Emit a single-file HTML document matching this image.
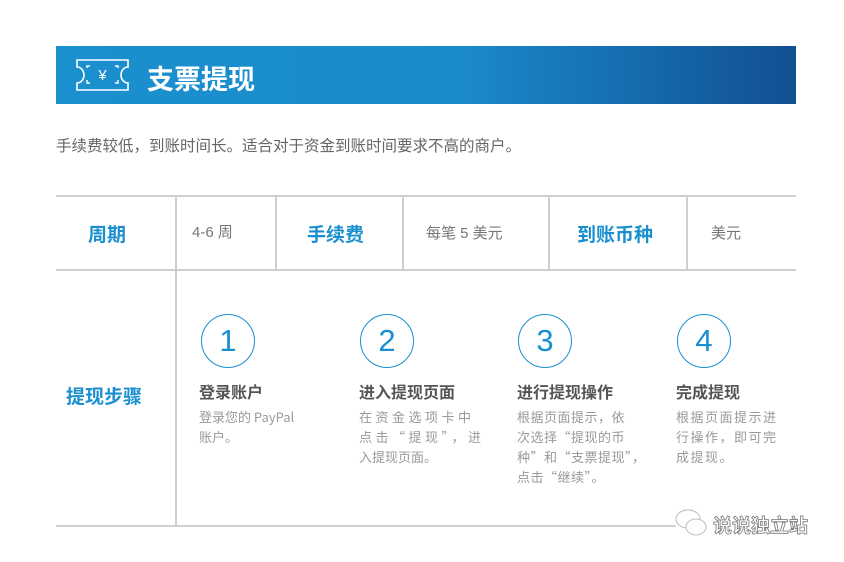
<!DOCTYPE html>
<html><head><meta charset="utf-8"><style>
body{margin:0;width:844px;height:562px;background:#fff;position:relative;overflow:hidden;font-family:"Liberation Sans","Noto Sans CJK SC",sans-serif}
.a{position:absolute;white-space:nowrap}
.l{position:absolute;background:#cfcfcf}
.lab{color:#1a8fd0;font-weight:bold;font-size:19px}
.g{color:#777;font-size:15px}
.c{position:absolute;width:52px;height:52px;border:1.6px solid #1a8fd0;border-radius:50%;color:#1a8fd0;font-size:31px;text-align:center;line-height:52px;top:314px}
.t{position:absolute;top:379px;font-size:16px;font-weight:bold;color:#555}
.d{position:absolute;top:407px;font-size:13px;color:#999;line-height:20px;white-space:nowrap;font-family:"Noto Sans CJK SC",sans-serif}
</style></head><body>
<div style="position:absolute;left:56px;top:46px;width:740px;height:58px;background:linear-gradient(90deg,#1b90cf 0%,#1a8acb 55%,#124f91 100%)"></div>
<svg class="a" style="left:74px;top:58px" width="58" height="34" viewBox="0 0 58 34" fill="none" stroke="#fff" stroke-width="1.6">
<path d="M3 2H54V9A7 8 0 0 0 54 25V32H3V25A7 8 0 0 0 3 9Z"/>
<path d="M13 10V8H16M41 8H44V10M13 22V25H16M41 25H44V22" stroke-width="1.4"/>
<text x="28.5" y="22" fill="#fff" stroke="none" font-size="15" text-anchor="middle" font-family="Liberation Sans">¥</text>
</svg>
<div class="a" style="left:147px;top:58px;color:#fff;font-size:27px;font-weight:bold">支票提现</div>
<div class="a" style="left:56px;top:134px;color:#666;font-size:15.5px">手续费较低，到账时间长。适合对于资金到账时间要求不高的商户。</div>
<div class="l" style="left:56px;top:195px;width:740px;height:1.5px"></div>
<div class="l" style="left:56px;top:269px;width:740px;height:1.5px"></div>
<div class="l" style="left:56px;top:525px;width:740px;height:1.5px"></div>
<div class="l" style="left:175px;top:195px;width:1.5px;height:331px"></div>
<div class="l" style="left:275px;top:195px;width:1.5px;height:75px"></div>
<div class="l" style="left:402px;top:195px;width:1.5px;height:75px"></div>
<div class="l" style="left:548px;top:195px;width:1.5px;height:75px"></div>
<div class="l" style="left:686px;top:195px;width:1.5px;height:75px"></div>
<div class="a lab" style="left:88px;top:220px">周期</div>
<div class="a g" style="left:192px;top:221px">4-6 周</div>
<div class="a lab" style="left:307px;top:220px">手续费</div>
<div class="a g" style="left:426px;top:222px">每笔 5 美元</div>
<div class="a lab" style="left:577px;top:220px">到账币种</div>
<div class="a g" style="left:711px;top:222px">美元</div>
<div class="a lab" style="left:66px;top:382px">提现步骤</div>
<div class="c" style="left:201px">1</div>
<div class="c" style="left:360px">2</div>
<div class="c" style="left:518px">3</div>
<div class="c" style="left:677px">4</div>
<div class="t" style="left:199px">登录账户</div>
<div class="t" style="left:359px">进入提现页面</div>
<div class="t" style="left:517px">进行提现操作</div>
<div class="t" style="left:676px">完成提现</div>
<div class="d" style="left:199px">登录您的 PayPal<br>账户。</div>
<div class="d" style="left:359px;letter-spacing:3.5px">在资金选项卡中<br>点击“提现”，进<br><span style="letter-spacing:0">入提现页面。</span></div>
<div class="d" style="left:517px;letter-spacing:0.5px">根据页面提示，依<br>次选择“提现的币<br>种”和“支票提现”，<br>点击“继续”。</div>
<div class="d" style="left:676px;letter-spacing:1.5px">根据页面提示进<br>行操作，即可完<br>成提现。</div>
<div class="a" style="left:676px;top:509px;width:140px;height:30px;background:#fff"></div>
<svg class="a" style="left:672px;top:507px" width="40" height="32" viewBox="0 0 40 32" fill="#fff" stroke="#bbb" stroke-width="1"><ellipse cx="16" cy="12" rx="12" ry="9"/><ellipse cx="24" cy="20" rx="10" ry="8"/></svg>
<div class="a" style="left:713px;top:511px;font-size:19px;color:#fff;-webkit-text-stroke:0.8px #777;font-weight:bold">说说独立站</div>
</body></html>
